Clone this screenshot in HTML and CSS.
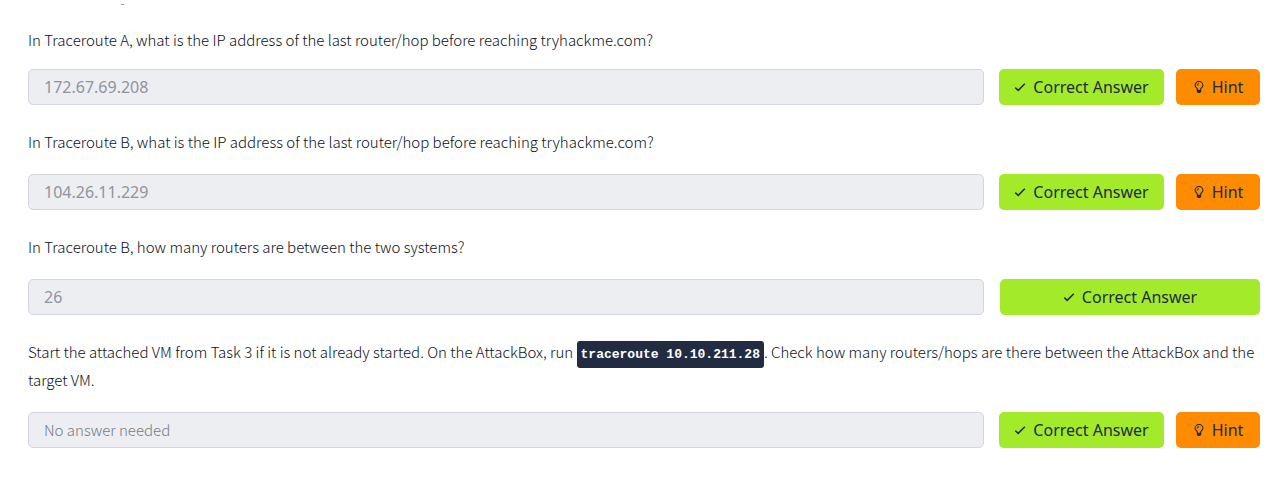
FILE: index.html
```html
<!DOCTYPE html>
<html lang="en">
<head>
<meta charset="utf-8">
<title>Traceroute questions</title>
<link rel="stylesheet" href="styles.css">
</head>
<body>
<svg class="sprite" aria-hidden="true">
  <symbol id="check" viewBox="0 0 12 12"><path d="M1.3 6.6 4.2 9.4 10.8 2.8" fill="none" stroke="currentColor" stroke-width="1.5"/></symbol>
  <symbol id="bulb" viewBox="0 0 12 12"><path d="M4.3 9V8.1C4.3 7.2 2.1 6.3 2.1 4.3a3.9 3.9 0 0 1 7.8 0C9.9 6.3 7.7 7.2 7.7 8.1V9M4.3 4.4C4.3 3.3 5 2.7 6 2.7" fill="none" stroke="currentColor" stroke-width="1.1"/><path d="M3.8 8.8h4.4v1.8L7.2 12H4.8l-1-1.4z" fill="currentColor"/></symbol>
</svg>
<main class="task">
  <div class="previous"><span class="mark"></span></div>
  <section class="question first">
    <label class="prompt" for="a1">In Traceroute A, what is the IP address of the last router/hop before reaching tryhackme.com?</label>
    <div class="row">
      <input class="answer" id="a1" type="text" value="172.67.69.208" disabled>
      <div class="actions">
        <button class="btn correct" type="button"><svg class="icon"><use href="#check"/></svg>Correct Answer</button>
        <button class="btn hint" type="button"><svg class="icon"><use href="#bulb"/></svg>Hint</button>
      </div>
    </div>
  </section>
  <section class="question">
    <label class="prompt" for="a2">In Traceroute B, what is the IP address of the last router/hop before reaching tryhackme.com?</label>
    <div class="row">
      <input class="answer" id="a2" type="text" value="104.26.11.229" disabled>
      <div class="actions">
        <button class="btn correct" type="button"><svg class="icon"><use href="#check"/></svg>Correct Answer</button>
        <button class="btn hint" type="button"><svg class="icon"><use href="#bulb"/></svg>Hint</button>
      </div>
    </div>
  </section>
  <section class="question">
    <label class="prompt" for="a3">In Traceroute B, how many routers are between the two systems?</label>
    <div class="row single">
      <input class="answer" id="a3" type="text" value="26" disabled>
      <div class="actions">
        <button class="btn correct" type="button"><svg class="icon"><use href="#check"/></svg>Correct Answer</button>
      </div>
    </div>
  </section>
  <section class="question">
    <label class="prompt" for="a4">Start the attached VM from Task 3 if it is not already started. On the AttackBox, run <code class="command">traceroute 10.10.211.28</code>. Check how many routers/hops are there between the AttackBox and the target VM.</label>
    <div class="row">
      <input class="answer" id="a4" type="text" placeholder="No answer needed" disabled>
      <div class="actions">
        <button class="btn correct" type="button"><svg class="icon"><use href="#check"/></svg>Correct Answer</button>
        <button class="btn hint" type="button"><svg class="icon"><use href="#bulb"/></svg>Hint</button>
      </div>
    </div>
  </section>
</main>
</body>
</html>
```
FILE: styles.css
```css
* { box-sizing: border-box; }
body {
  margin: 0;
  background: #fff;
  color: #0c111c;
  font-family: "Noto Sans CJK SC", "Noto Sans", sans-serif;
  font-size: 15px;
  font-weight: 300;
  line-height: 28px;
}
.sprite { display: none; }
.task { padding: 0 19px 0 28px; }
.previous { height: 26px; padding: 4px 0 0 93px; }
.mark { display: block; width: 3px; height: 1px; background: #9a9f9c; }
.question { margin-bottom: 23px; }
.prompt { display: block; margin-bottom: 18px; }
.first .prompt { margin-bottom: 15px; }
.row { display: flex; gap: 15px; }
.answer {
  flex: 1;
  min-width: 0;
  height: 36px;
  padding: 0 15px;
  border: 1px solid #d3d5e0;
  border-radius: 5px;
  background: #edeef2;
  color: #8f949e;
  font-family: "Noto Sans", sans-serif;
  font-size: 16px;
}
.answer::placeholder {
  color: #757b87;
  font-family: "Noto Sans CJK SC", sans-serif;
  font-size: 15px;
  font-weight: 300;
  opacity: 1;
}
.actions { display: flex; gap: 12px; width: 261px; }
.single { gap: 16px; }
.single .actions { width: 260px; }
.btn {
  display: flex;
  align-items: center;
  justify-content: center;
  gap: 7px;
  height: 36px;
  padding: 0;
  border: 0;
  border-radius: 5px;
  color: #212c42;
  font-family: "Noto Sans", sans-serif;
  font-size: 16px;
}
.correct { flex: 1; background: #a3ea2a; }
.hint { width: 84px; background: #ff8b00; }
.icon { width: 12px; height: 12px; flex: none; }
.command {
  padding: 6px 4px;
  border-radius: 3px;
  background: #212c42;
  color: #fff;
  font-family: "Liberation Mono", monospace;
  font-size: 13px;
  font-weight: 700;
  line-height: 20px;
}
```
